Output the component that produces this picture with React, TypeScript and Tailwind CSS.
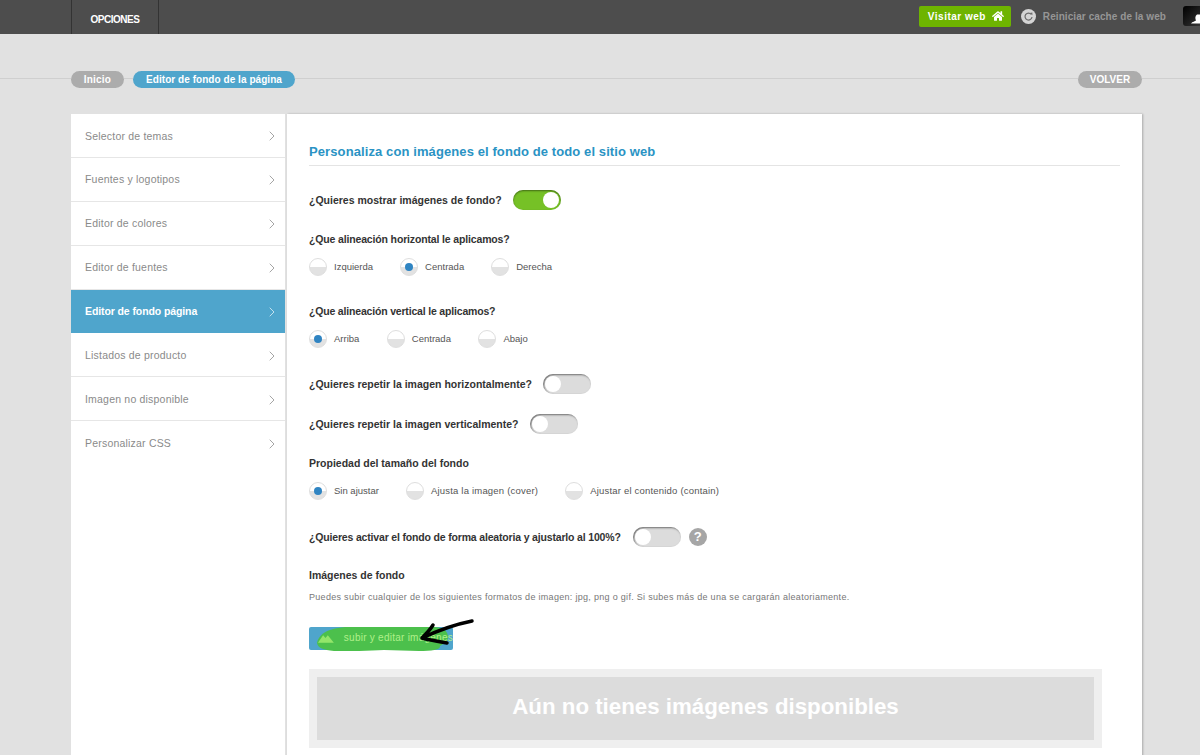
import React from 'react';
import { ChevronRight } from 'lucide-react';
import { FaHome } from 'react-icons/fa';

const menuItems = [
  'Selector de temas',
  'Fuentes y logotipos',
  'Editor de colores',
  'Editor de fuentes',
  'Editor de fondo página',
  'Listados de producto',
  'Imagen no disponible',
  'Personalizar CSS',
];

const Toggle = ({ on = false }: { on?: boolean }) =>
  on ? (
    <div className="flex h-[20px] w-[48px] items-center justify-end rounded-full bg-[#76c126] pr-[2px] shadow-[inset_0_1px_2px_rgba(0,0,0,0.45)]">
      <div className="h-[16px] w-[16px] rounded-full bg-white" />
    </div>
  ) : (
    <div className="flex h-[20px] w-[48px] items-center rounded-full bg-[#dcdcdc] pl-[2px] shadow-[inset_1px_1px_2px_rgba(0,0,0,0.5)]">
      <div className="h-[16px] w-[16px] rounded-full bg-white" />
    </div>
  );

const Radio = ({ label, checked = false, className = '' }: { label: string; checked?: boolean; className?: string }) => (
  <div className="flex items-center gap-[7px]">
    <div className="flex h-[18px] w-[18px] items-center justify-center rounded-full border border-[#dedede] bg-[linear-gradient(#ffffff_50%,#e2e2e2_50%)]">
      {checked && <div className="h-[8px] w-[8px] rounded-full bg-[#2f84c2]" />}
    </div>
    <span className={`text-[9.5px] text-[#555] ${className}`}>{label}</span>
  </div>
);

const Label = ({ children, className = '' }: { children: React.ReactNode; className?: string }) => (
  <span className={`pt-[2px] text-[10.5px] font-bold text-[#333] ${className}`}>{children}</span>
);

const Line = ({ className }: { className: string }) => <div className={`mb-[2px] h-px bg-[#cfcfcf] ${className}`} />;

const TopBar = () => (
  <div className="flex h-[34px] items-center bg-[#4d4d4d] pl-[71px]">
    <div className="flex h-full w-[88px] items-center justify-center border-x border-[#333] pt-[5px] text-[10px] font-bold tracking-[-0.5px] text-white">
      OPCIONES
    </div>
    <div className="ml-auto flex items-center pb-[2px]">
      <div className="flex h-[21px] w-[92px] items-center justify-between rounded-[2px] bg-[#6eb400] pl-[9px] pr-[7px] text-[10px] font-bold tracking-[0.5px] text-white">
        Visitar web
        <FaHome className="text-[12px]" />
      </div>
      <svg className="ml-[10px]" width="15" height="15" viewBox="0 0 15 15">
        <circle cx="7.5" cy="7.5" r="7.5" fill="#d4d4d4" />
        <path d="M10.300 5.400A3.500 3.500 0 1 0 11 8" fill="none" stroke="#6a6a6a" strokeWidth="1.2" />
        <path d="M8.800 4l2.600-.5 0 2.800z" fill="#6a6a6a" />
      </svg>
      <span className="ml-[7px] text-[10px] font-bold tracking-[0.08px] text-[#969696]">Reiniciar cache de la web</span>
      <div className="ml-[17px] h-[20px] w-[17px] overflow-hidden rounded-l-[3px] bg-[linear-gradient(135deg,#000,#333)]">
        <svg width="17" height="20" viewBox="0 0 17 20">
          <path d="M8 17.500C9.500 15.500 12 15.500 13 14.500C12 12.500 12 10 14 8.500L17 8.500L17 17.500z" fill="#fff" />
        </svg>
      </div>
    </div>
  </div>
);

const Breadcrumb = () => (
  <div className="mt-[37px] flex h-[17px] items-center text-[10px] font-bold text-white">
    <Line className="w-[71px]" />
    <div className="flex h-full w-[53px] items-center justify-center rounded-full bg-[#acacac] tracking-[0.2px]">Inicio</div>
    <Line className="w-[9px]" />
    <div className="flex h-full w-[162px] items-center justify-center rounded-full bg-[#4fa5cc] tracking-[0.05px]">
      Editor de fondo de la página
    </div>
    <Line className="flex-1" />
    <div className="flex h-full w-[64px] items-center justify-center rounded-full bg-[#acacac]">VOLVER</div>
    <Line className="w-[58px]" />
  </div>
);

const Sidebar = () => (
  <div className="w-[214px] shrink-0 bg-white">
    {menuItems.map((item, i) => {
      const active = item === 'Editor de fondo página';
      const last = i === menuItems.length - 1;
      return (
        <div
          key={item}
          className={`flex h-[43.9px] items-center justify-between pl-[14px] pr-[5px] pt-[2px] text-[10.5px] ${
            last ? '' : 'border-b'
          } ${active ? 'border-[#4fa5cc] bg-[#4fa5cc] font-bold tracking-[-0.1px] text-white' : 'border-[#e6e6e6] tracking-[0.2px] text-[#8a8a8a]'}`}
        >
          {item}
          <ChevronRight size={16} strokeWidth={1} className={active ? 'text-white' : 'text-[#777]'} />
        </div>
      );
    })}
  </div>
);

const UploadButton = () => (
  <div className="relative flex h-[23px] w-[144px] items-center rounded-[2px] bg-[#4fa5cc] pl-[9px]">
    <svg className="absolute left-0 top-0" width="144" height="26" viewBox="0 0 144 26">
      <path d="M8 16C10 8 16 2 36 0L126 0C136 1 139 5 139 10C139 15 134 17 131 19C132 23 122 24 110 24L75 23C60 24 40 24 25 24C14 23 9 21 8 16z" fill="#4cc04c" />
    </svg>
    <svg className="relative" width="17" height="9" viewBox="0 0 17 9">
      <path d="M0 9L5.500 1L8 4L10.500 1L17 9z" fill="#93e66a" />
    </svg>
    <span className="relative mb-[2px] ml-[10px] whitespace-nowrap text-[10px] tracking-[0.25px] text-[#b0f08a]">subir y editar imágenes</span>
    <svg className="absolute left-[108px] top-[-11px]" width="60" height="30" viewBox="0 0 60 30">
      <path d="M55 5C40 8 22 14 5 22M16 9C13 14 9 18 5 22C12 24 20 25 30 27" fill="none" stroke="#000" strokeWidth="3.500" strokeLinecap="round" strokeLinejoin="round" />
    </svg>
  </div>
);

const MainPanel = () => (
  <div className="ml-[2px] h-[800px] w-[855px] bg-white pl-[22px] pr-[22px] shadow-[1px_0_2px_rgba(0,0,0,0.25)]">
    <div className="flex h-[52px] items-end border-b border-[#e4e4e4] pb-[4px] text-[13px] font-bold tracking-[0.1px] text-[#2a93c4]">
      Personaliza con imágenes el fondo de todo el sitio web
    </div>

    <div className="mt-[24px] flex h-[20px] items-center gap-[11px]">
      <Label>¿Quieres mostrar imágenes de fondo?</Label>
      <Toggle on />
    </div>

    <div className="mt-[22px] flex h-[14px] items-center">
      <Label className="tracking-[-0.15px]">¿Que alineación horizontal le aplicamos?</Label>
    </div>
    <div className="mt-[12px] flex h-[18px] items-center gap-[27px]">
      <Radio label="Izquierda" />
      <Radio label="Centrada" checked />
      <Radio label="Derecha" />
    </div>

    <div className="mt-[28px] flex h-[14px] items-center">
      <Label className="tracking-[-0.18px]">¿Que alineación vertical le aplicamos?</Label>
    </div>
    <div className="mt-[12px] flex h-[18px] items-center gap-[27.5px]">
      <Radio label="Arriba" checked />
      <Radio label="Centrada" />
      <Radio label="Abajo" />
    </div>

    <div className="mt-[26px] flex h-[20px] items-center gap-[11px]">
      <Label>¿Quieres repetir la imagen horizontalmente?</Label>
      <Toggle />
    </div>
    <div className="mt-[20px] flex h-[20px] items-center gap-[11px]">
      <Label>¿Quieres repetir la imagen verticalmente?</Label>
      <Toggle />
    </div>

    <div className="mt-[22px] flex h-[14px] items-center">
      <Label>Propiedad del tamaño del fondo</Label>
    </div>
    <div className="mt-[12px] flex h-[18px] items-center gap-[27px]">
      <Radio label="Sin ajustar" checked />
      <Radio label="Ajusta la imagen (cover)" className="tracking-[0.2px]" />
      <Radio label="Ajustar el contenido (contain)" className="tracking-[0.2px]" />
    </div>

    <div className="mt-[27px] flex h-[20px] items-center gap-[12px]">
      <Label className="tracking-[-0.17px]">¿Quieres activar el fondo de forma aleatoria y ajustarlo al 100%?</Label>
      <Toggle />
      <div className="-ml-[4px] flex h-[18px] w-[18px] items-center justify-center rounded-full bg-[#a6a6a6] text-[13px] font-bold text-white">?</div>
    </div>

    <div className="mt-[21px] flex h-[14px] items-center">
      <Label>Imágenes de fondo</Label>
    </div>
    <p className="mt-[8px] h-[14px] text-[9px] leading-[14px] tracking-[0.3px] text-[#777]">
      Puedes subir cualquier de los siguientes formatos de imagen: jpg, png o gif. Si subes más de una se cargarán aleatoriamente.
    </p>

    <div className="mt-[23px]">
      <UploadButton />
    </div>

    <div className="mt-[19px] w-[793px] bg-[#efefef] p-[8px]">
      <div className="flex h-[63px] items-center justify-center bg-[#dcdcdc] pb-[3px] text-[22.3px] font-bold text-white">
        Aún no tienes imágenes disponibles
      </div>
    </div>
  </div>
);

export default function App() {
  return (
    <div className="h-[755px] overflow-hidden bg-[#e1e1e1] font-['Liberation_Sans',Arial,sans-serif]">
      <TopBar />
      <Breadcrumb />
      <div className="mt-[26px] flex pl-[71px]">
        <Sidebar />
        <MainPanel />
      </div>
    </div>
  );
}
